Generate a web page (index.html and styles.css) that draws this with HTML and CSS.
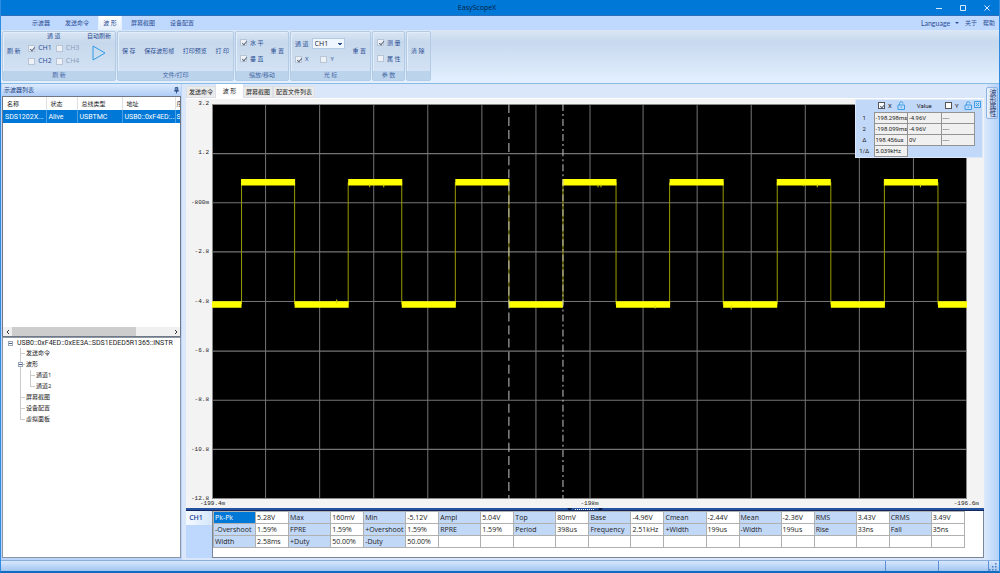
FILE: index.html
```html
<!DOCTYPE html>
<html lang="zh-CN">
<head>
<meta charset="utf-8">
<title>EasyScopeX</title>
<link rel="stylesheet" href="styles.css">
</head>
<body>
<div class="app">
  <header class="titlebar">
    <h1 class="title">EasyScopeX</h1>
    <div class="window-buttons">
      <button aria-label="Minimize"><svg viewBox="0 0 6 6"><path d="M0 3.5h6"/></svg></button>
      <button aria-label="Maximize"><svg viewBox="0 0 6 6"><path d="M.5 .5h5v5h-5z"/></svg></button>
      <button aria-label="Close"><svg viewBox="0 0 6 6"><path d="M.5 .5l5 5M5.500 .5l-5 5"/></svg></button>
    </div>
  </header>
  <nav class="menu">
    <button>示波器</button>
    <button>发送命令</button>
    <button class="current">波 形</button>
    <button>屏幕截图</button>
    <button>设备配置</button>
    <div class="menu-right">
      <button class="latin">Language <span class="caret"></span></button>
      <button>关于</button>
      <button>帮助</button>
    </div>
  </nav>
  <div class="ribbon">
    <section class="group g-refresh">
      <div class="tools">
        <button>刷 新</button>
        <fieldset class="channels">
          <legend>通 道</legend>
          <label><input type="checkbox" checked>CH1</label>
          <label class="off"><input type="checkbox" disabled>CH3</label>
          <label><input type="checkbox">CH2</label>
          <label class="off"><input type="checkbox" disabled>CH4</label>
        </fieldset>
        <button class="auto">自动刷新<svg viewBox="0 0 14 16"><path d="M1 1l12 7L1 15z"/></svg></button>
      </div>
      <h2>刷 新</h2>
    </section>
    <section class="group g-file">
      <div class="tools">
        <button>保 存</button><button>保存波形帧</button><button>打印预览</button><button>打 印</button>
      </div>
      <h2>文件/打印</h2>
    </section>
    <section class="group g-zoom">
      <div class="tools">
        <div class="stack">
          <label><input type="checkbox" checked>水 平</label>
          <label><input type="checkbox" checked>垂 直</label>
        </div>
        <button>重 置</button>
      </div>
      <h2>缩放/移动</h2>
    </section>
    <section class="group g-cursor">
      <div class="tools">
        <div class="stack">
          <label>通 道 <select><option>CH1</option><option>CH2</option></select></label>
          <div class="axes">
            <label><input type="checkbox" checked>X</label>
            <label><input type="checkbox">Y</label>
          </div>
        </div>
        <button>重 置</button>
      </div>
      <h2>光 标</h2>
    </section>
    <section class="group g-params">
      <div class="tools">
        <div class="stack">
          <label><input type="checkbox" checked>测 量</label>
          <label><input type="checkbox">属 性</label>
        </div>
      </div>
      <h2>参 数</h2>
    </section>
    <section class="group g-clear">
      <div class="tools"><button>清 除</button></div>
      <h2></h2>
    </section>
  </div>

  <main class="workspace">
    <aside class="sidebar">
      <header class="panel-head">示波器列表
        <button aria-label="Pin"><svg viewBox="0 0 6 8"><path d="M1.500 .5h3v4h-3zM3.500 .5v4M0 4.500h6M3 4.500v3"/></svg></button>
      </header>
      <div class="devices">
        <div class="device-clip">
          <table>
            <thead><tr><th>名称</th><th>状态</th><th>总线类型</th><th>地址</th><th>序</th></tr></thead>
            <tbody><tr><td>SDS1202X...</td><td>Alive</td><td>USBTMC</td><td>USB0::0xF4ED:...</td><td>S</td></tr></tbody>
          </table>
        </div>
        <div class="scroll">
          <button aria-label="Scroll left"><svg viewBox="0 0 4 6"><path d="M3 1L1 3l2 2"/></svg></button>
          <div class="track"><div class="thumb"></div></div>
          <button aria-label="Scroll right"><svg viewBox="0 0 4 6"><path d="M1 1l2 2-2 2"/></svg></button>
        </div>
      </div>
      <div class="tree">
        <div class="root"><span class="toggle"></span>USB0::0xF4ED::0xEE3A::SDS1EDED5R1365::INSTR</div>
        <ul>
          <li>发送命令</li>
          <li><span class="toggle"></span>波形
            <ul><li>通道1</li><li>通道2</li></ul>
          </li>
          <li>屏幕截图</li>
          <li>设备配置</li>
          <li>虚拟面板</li>
        </ul>
      </div>
    </aside>

    <section class="content">
      <nav class="doc-tabs">
        <button>发送命令</button><button class="current">波 形</button><button>屏幕截图</button><button>配置文件列表</button>
      </nav>
      <div class="scope">
        <div class="y-axis">
          <span>3.2</span><span>1.2</span><span>-800m</span><span>-2.8</span><span>-4.8</span><span>-6.8</span><span>-8.8</span><span>-10.8</span><span>-12.8</span>
        </div>
        <svg class="plot" viewBox="0 0 754 394" preserveAspectRatio="none" role="img" aria-label="CH1">
          <rect width="754" height="394" fill="#000"/>
          <path class="grid" d="M53.500 0v394M107.500 0v394M161.500 0v394M215.500 0v394M269.500 0v394M323.500 0v394M377.500 0v394M430.500 0v394M484.500 0v394M538.500 0v394M592.500 0v394M646.500 0v394M700.500 0v394M0 49.500h754M0 98.500h754M0 147.500h754M0 197h754M0 246.500h754M0 295.500h754M0 344.500h754"/>
          <rect class="frame" x=".5" y=".5" width="753" height="393"/>
          <path class="edge" d="M29.500 78v122M82.500 78v122M136 78v122M189.500 78v122M243 78v122M296.500 78v122M350.500 78v122M403.500 78v122M457 78v122M510.500 78v122M564.500 78v122M618 78v122M671.500 78v122M725 78v122"/>
          <path class="level" d="M29 78h54M136 78h54M243 78h54M350 78h54M457 78h54M564 78h54M671 78h54M0 200h29.500M82.500 200h54M189.500 200h54M296.500 200h54M403.500 200h54M510.500 200h54M618 200h54M725 200h29"/>
          <path class="noise" d="M157.500 80v3M171.500 80v3M385.500 80v3M388.500 80v3M590.500 80v2M604.500 80v3M707.500 80v3M124.500 195v4M442.500 201v3M518.500 201v4"/>
          <path class="cursor-a" d="M296.500 0v394"/>
          <path class="cursor-b" d="M350.500 0v394"/>
        </svg>
        <div class="x-axis"><span>-199.4m</span><span>-198m</span><span>-196.6m</span></div>
        <div class="readout">
          <table>
            <thead>
              <tr>
                <th></th>
                <th><span class="axis-head"><label><input type="checkbox" checked>X</label><svg class="lock" viewBox="0 0 8 9"><path d="M1 4h6.500v4.500H1zM2.500 4V2.500a1.500 1.500 0 0 1 3.500 0M4.200 5.500v1.500"/></svg></span></th>
                <th>Value</th>
                <th><span class="axis-head"><label><input type="checkbox">Y</label><svg class="lock" viewBox="0 0 8 9"><path d="M1 4h6.500v4.500H1zM2.500 4V2.500a1.500 1.500 0 0 1 3.500 0M4.200 5.500v1.500"/></svg></span></th>
              </tr>
            </thead>
            <tbody>
              <tr><th>1</th><td>-198.298ms</td><td>-4.96V</td><td>----</td></tr>
              <tr><th>2</th><td>-198.099ms</td><td>-4.96V</td><td>----</td></tr>
              <tr><th>Δ</th><td>198.456us</td><td>0V</td><td>----</td></tr>
              <tr><th>1/Δ</th><td>5.039kHz</td></tr>
            </tbody>
          </table>
          <button class="close" aria-label="Close"><svg viewBox="0 0 7 7"><path d="M.5 .5h6v6h-6zM2 2l3 3M5 2L2 5"/></svg></button>
        </div>
      </div>
      <div class="splitter"><svg viewBox="0 0 36 3"><path d="M0 0h5L2.500 3zM31 0h5l-2.500 3z" fill="#0a1c4a"/><path d="M8 1.500h20" stroke="#e8f0ff" stroke-dasharray="1 1"/></svg></div>
      <div class="measure">
        <button class="ch-tab">CH1</button>
        <div class="measure-box">
          <table>
            <tbody>
              <tr><th class="selected">Pk-Pk</th><td>5.28V</td><th>Max</th><td>160mV</td><th>Min</th><td>-5.12V</td><th>Ampl</th><td>5.04V</td><th>Top</th><td>80mV</td><th>Base</th><td>-4.96V</td><th>Cmean</th><td>-2.44V</td><th>Mean</th><td>-2.36V</td><th>RMS</th><td>3.43V</td><th>CRMS</th><td>3.49V</td></tr>
              <tr><th>-Overshoot</th><td>1.59%</td><th>FPRE</th><td>1.59%</td><th>+Overshoot</th><td>1.59%</td><th>RPRE</th><td>1.59%</td><th>Period</th><td>398us</td><th>Frequency</th><td>2.51kHz</td><th>+Width</th><td>199us</td><th>-Width</th><td>199us</td><th>Rise</th><td>33ns</td><th>Fall</th><td>35ns</td></tr>
              <tr><th>Width</th><td>2.58ms</td><th>+Duty</th><td>50.00%</td><th>-Duty</th><td>50.00%</td><td></td><td></td><td></td><td></td><td></td><td></td><td></td><td></td><td></td><td></td><td></td><td></td><td></td><td></td></tr>
            </tbody>
          </table>
        </div>
      </div>
    </section>
    <aside class="dock"><button>波形属性</button></aside>
  </main>
  <footer class="status"><span></span><span></span><span></span><svg viewBox="0 0 8 8"><path d="M6 0h1.500v1.500H6zM3 3h1.500v1.500H3zM6 3h1.500v1.500H6zM0 6h1.500v1.500H0zM3 6h1.500v1.500H3zM6 6h1.500v1.500H6z"/></svg></footer>
</div>
</body>
</html>
```
FILE: styles.css
```css
* { box-sizing: border-box; }
body {
  margin: 0;
  font: 6px/8px "Open Sans", "Noto Sans CJK SC", sans-serif;
  color: #222;
}
button, input, select { font: inherit; color: inherit; margin: 0; }
button { border: 0; padding: 0; background: none; white-space: nowrap; }
h1, h2 { margin: 0; font: inherit; }
svg { display: block; fill: none; }
table { border-collapse: collapse; }
th { font-weight: 400; text-align: left; }
input[type="checkbox"] {
  appearance: none;
  position: relative;
  width: 7px;
  height: 7px;
  border: 1px solid #b9c4d4;
  background: #eef1f5;
  flex: none;
}
input[type="checkbox"]:checked::after {
  content: "";
  position: absolute;
  left: 2px;
  top: 0;
  width: 2px;
  height: 4px;
  border: solid #5d6b82;
  border-width: 0 1px 1px 0;
  transform: rotate(40deg);
}

.app {
  display: flex;
  flex-direction: column;
  height: 100vh;
  border: solid #2f8be0;
  border-width: 0 1px 2px;
  border-bottom-color: #0f6cc0;
  background: #c4dbfb;
}

/* Title bar */
.titlebar {
  display: grid;
  grid-template-columns: 1fr auto 1fr;
  align-items: center;
  height: 16px;
  background: #0078d7;
  border-bottom: 1px solid #2a6fba;
  flex: none;
}
.title { grid-column: 2; padding-right: 46px; color: #04213f; font-size: 7px; }
.window-buttons { justify-self: end; display: flex; gap: 18px; padding-right: 9px; }
.window-buttons svg { width: 6px; height: 6px; stroke: #d7eaff; stroke-width: 1; }

/* Main menu */
.menu {
  display: flex;
  gap: 1px;
  height: 14px;
  flex: none;
  padding-left: 24px;
  background: #bfd8fe;
  color: #2b4e93;
}
.menu button { padding: 0 7px; }
.menu .current {
  background: linear-gradient(#fff, #e3eefc);
  padding: 0 4px;
  margin: 0 1px;
  width: 24px;
  border: solid #e6f1ff;
  border-width: 0 1px;
}
.menu-right { display: flex; gap: 6px; margin-left: auto; padding-right: 4px; }
.menu-right button { padding: 0; }
.menu .latin { font-family: Lato, sans-serif; font-size: 7px; }
.caret {
  display: inline-block;
  border: 2px solid transparent;
  border-top-color: #2b4e93;
  border-bottom: 0;
  margin-left: 3px;
  vertical-align: 2px;
}

/* Ribbon */
.ribbon {
  display: flex;
  gap: 1px;
  height: 54px;
  flex: none;
  padding: 1px 1px 2px;
  background: linear-gradient(#dbe7f5, #c7d9ee 22%, #e3f0ff);
  border-bottom: 1px solid #8cbbe2;
  color: #2b4e93;
}
.group {
  display: flex;
  flex-direction: column;
  border: 1px solid #b3cbe5;
  border-radius: 2px;
  background: linear-gradient(#dae6f4, #c7d8ec 22%, #d6e5f6);
  box-shadow: inset 1px 1px 0 #e3eefa;
}
.group h2 {
  height: 9px;
  line-height: 9px;
  text-align: center;
  background: #bcd3ec;
  color: #4568a4;
  flex: none;
}
.tools { display: flex; flex: 1; align-items: center; padding: 0 4px 2px; justify-content: space-between; }
.tools label { display: flex; align-items: center; gap: 3px; white-space: nowrap; }
.g-refresh { width: 114px; }
.g-file { width: 117px; }
.g-zoom { width: 54px; }
.g-cursor { width: 81px; }
.g-params { width: 33px; }
.g-clear { width: 25px; }
.channels {
  display: grid;
  grid-template-columns: auto auto;
  gap: 5px 4px;
  align-self: flex-start;
  margin: 0;
  padding: 4px 0 0;
  border: 0;
  font-size: 7px;
}
.channels legend { padding: 0; margin: 0 auto; font-size: 6px; }
.channels .off { color: #8b9cb9; }
.auto { display: flex; flex-direction: column; align-self: flex-start; align-items: center; gap: 5px; }
.auto svg { width: 14px; height: 16px; stroke: #2f9be6; }
.stack { display: flex; flex-direction: column; gap: 8px; }
.axes { display: flex; gap: 12px; }
.g-cursor .stack { gap: 6px; }
.tools select {
  width: 33px;
  height: 11px;
  padding: 0 2px;
  border: 1px solid #b3cbe5;
  color: #222;
  font-size: 7px;
  line-height: 9px;
  appearance: none;
  background: linear-gradient(45deg, transparent 50%, #2b4e93 50%) 25px 4px / 2px 2px no-repeat,
    linear-gradient(-45deg, transparent 50%, #2b4e93 50%) 27px 4px / 2px 2px no-repeat, #f0f6ff;
}

/* Workspace */
.workspace { display: flex; flex: 1; min-height: 0; background: #dae7fa; }
.sidebar {
  display: flex;
  flex-direction: column;
  width: 181px;
  flex: none;
  padding: 0 1px 2px;
  background: #b9d3fa;
}
.panel-head {
  display: flex;
  justify-content: space-between;
  align-items: center;
  height: 12px;
  flex: none;
  padding: 0 2px;
  background: linear-gradient(#dceafd, #b0cdf7);
  color: #1c3e7e;
}
.panel-head svg { width: 5px; height: 7px; stroke: #1c3e7e; }
.devices {
  display: flex;
  flex-direction: column;
  flex: 241;
  min-height: 0;
  border: 1px solid #6f7884;
  background: #fff;
}
.device-clip { flex: 1; overflow: hidden; }
.devices table { table-layout: fixed; width: 190px; }
.devices th, .devices td { padding: 0 2px; height: 13px; white-space: nowrap; overflow: hidden; }
.devices th { padding-left: 4px; border-right: 1px solid #e0e0e0; }
.devices td {
  background: #0078d7;
  color: #fff;
  font-family: Roboto, sans-serif;
  font-size: 7px;
  border-right: 1px solid #4a9fe2;
}
.devices th:nth-child(1) { width: 43px; }
.devices th:nth-child(2) { width: 31px; }
.devices th:nth-child(3) { width: 45px; }
.devices th:nth-child(4) { width: 53px; }
.devices th:nth-child(5) { padding-left: 1px; }
.devices td:nth-child(5) { padding-left: 1px; }
.devices td:nth-child(4) { padding-right: 0; }
.scroll { display: flex; height: 9px; background: #f0f0f0; }
.scroll button { width: 9px; display: grid; place-items: center; }
.scroll svg { width: 4px; height: 6px; stroke: #333; }
.track { flex: 1; }
.thumb { width: 78%; height: 100%; background: #cdcdcd; }
.tree {
  flex: 220;
  min-height: 0;
  padding: 0 5px;
  border: 1px solid #8d98a7;
  background: #fff;
  line-height: 10px;
}
.tree ul { list-style: none; margin: 0; padding-left: 10px; }
.tree li ul { padding-left: 2px; }
.root { display: flex; align-items: center; gap: 4px; font-family: Roboto, sans-serif; font-size: 7px; white-space: nowrap; }
.toggle {
  display: inline-block;
  flex: none;
  width: 5px;
  height: 5px;
  border: 1px solid #9aa7b8;
  background: linear-gradient(#4a5f86, #4a5f86) center / 3px 1px no-repeat #fff;
}
.tree li { position: relative; padding-left: 8px; min-height: 11px; line-height: 11px; }
.tree li::before {
  content: "";
  position: absolute;
  left: 2px;
  top: 0;
  height: 100%;
  border-left: 1px solid #ccc;
}
.tree li:last-child::before { height: 6px; }
.tree li::after {
  content: "";
  position: absolute;
  left: 2px;
  top: 5px;
  width: 5px;
  border-top: 1px solid #ccc;
}
.tree li > .toggle { position: absolute; left: 0; top: 3px; z-index: 1; }

.content { display: flex; flex-direction: column; flex: 1; min-width: 0; padding: 0 0 2px 4px; }
.doc-tabs { display: flex; height: 14px; flex: none; align-items: flex-end; }
.doc-tabs button { height: 12px; padding: 0 2px; background: #ebebeb; border: 1px solid #dcdfe5; }
.doc-tabs .current { height: 14px; width: 27px; background: #fff; border-color: #fff; }
.scope {
  position: relative;
  display: grid;
  grid-template-columns: 26px 1fr;
  grid-template-rows: 1fr 9px;
  flex: 1;
  min-height: 0;
  padding: 5px 17px 0 0;
  background: #f3f3f3;
  border-top: 1px solid #fff;
  font-family: "Liberation Mono", monospace;
}
.y-axis {
  display: flex;
  flex-direction: column;
  justify-content: space-between;
  text-align: right;
  margin: -4px 3px -4px 0;
}
.plot { width: 100%; height: 100%; min-height: 0; }
.grid { stroke: #747474; }
.frame { stroke: #8a8a8a; }
.edge { stroke: #9a9a00; }
.level { stroke: #ff0; stroke-width: 6.5; }
.noise { stroke: #d5d500; }
.cursor-a { stroke: #c4c4c4; stroke-dasharray: 9 4; }
.cursor-b { stroke: #c4c4c4; stroke-dasharray: 7 3 2 3; }
.x-axis {
  grid-column: 2;
  display: flex;
  justify-content: space-between;
  margin: 1px -12px 0;
}
.readout {
  position: absolute;
  top: 0;
  right: 1px;
  width: 128px;
  height: 59px;
  padding: 0 0 0 2px;
  border: 1px solid #dce9fb;
  background: #c2d8f8;
  font-family: Roboto, "Open Sans", sans-serif;
}
.readout table { table-layout: fixed; width: 117px; }
.readout th, .readout td { height: 11px; padding: 0 1px; line-height: 8px; white-space: nowrap; overflow: hidden; }
.readout td { background: #f0f0f0; border: 1px solid #939393; }
.readout th:first-child { width: 16px; padding: 0 3px 0 0; text-align: center; }
.readout thead th { height: 12px; text-align: center; }
.readout label { display: flex; align-items: center; gap: 3px; }
.readout input { border-color: #555; background: #fff; }
.axis-head { display: flex; gap: 5px; align-items: center; padding-left: 3px; }
.lock { width: 8px; height: 9px; stroke: #3d9fe6; }
.close { position: absolute; top: 1px; right: 1px; }
.close svg { width: 7px; height: 7px; stroke: #3d9fe6; }

.splitter { height: 3px; flex: none; background: #2450a0; display: flex; justify-content: center; border-bottom: 1px solid #12285c; }
.splitter svg { width: 36px; height: 3px; }
.measure { display: flex; height: 47px; flex: none; background: #bdd8fc; font-size: 7px; }
.ch-tab {
  width: 26px;
  height: 14px;
  padding-right: 6px;
  background: linear-gradient(90deg, #f5faff, #d5e6fc);
  color: #1c3e9a;
  font-weight: 600;
}
.measure-box { flex: 1; min-width: 0; padding-right: 18px; background: #fff; border: solid #7a8798; border-width: 0 1px 1px; }
.measure table { table-layout: fixed; width: 100%; }
.measure th, .measure td { height: 12px; padding: 0 1px; border: 1px solid #b0b0b0; line-height: 10px; white-space: nowrap; }
.measure tr:first-child > :nth-child(odd) { width: 5.6%; }
.measure tr:first-child > :nth-child(even) { width: 4.4%; }
.measure th { background: #c2d8f7; }
.measure .selected { background: #0078d7; color: #fff; }

.dock { width: 15px; flex: none; padding: 3px 1px 0 2px; background: linear-gradient(90deg, #dceafc, #b4d1fa); }
.dock button {
  width: 12px;
  height: 32px;
  writing-mode: vertical-rl;
  border: 1px solid #8fb2df;
  border-radius: 2px;
  background: linear-gradient(90deg, #eaf3ff, #b8d2f6);
  color: #1c2e5e;
  font-size: 7px;
}

.status {
  display: grid;
  grid-template-columns: 1fr 53px 50px 10px;
  height: 11px;
  flex: none;
  align-items: stretch;
  border-top: 1px solid #8aaedb;
  background: linear-gradient(#d8e8fd, #a2c4f1);
}
.status span { border-right: 1px solid #5c8fd0; }
.status svg { width: 8px; height: 8px; fill: #4f80c4; align-self: end; }
```
